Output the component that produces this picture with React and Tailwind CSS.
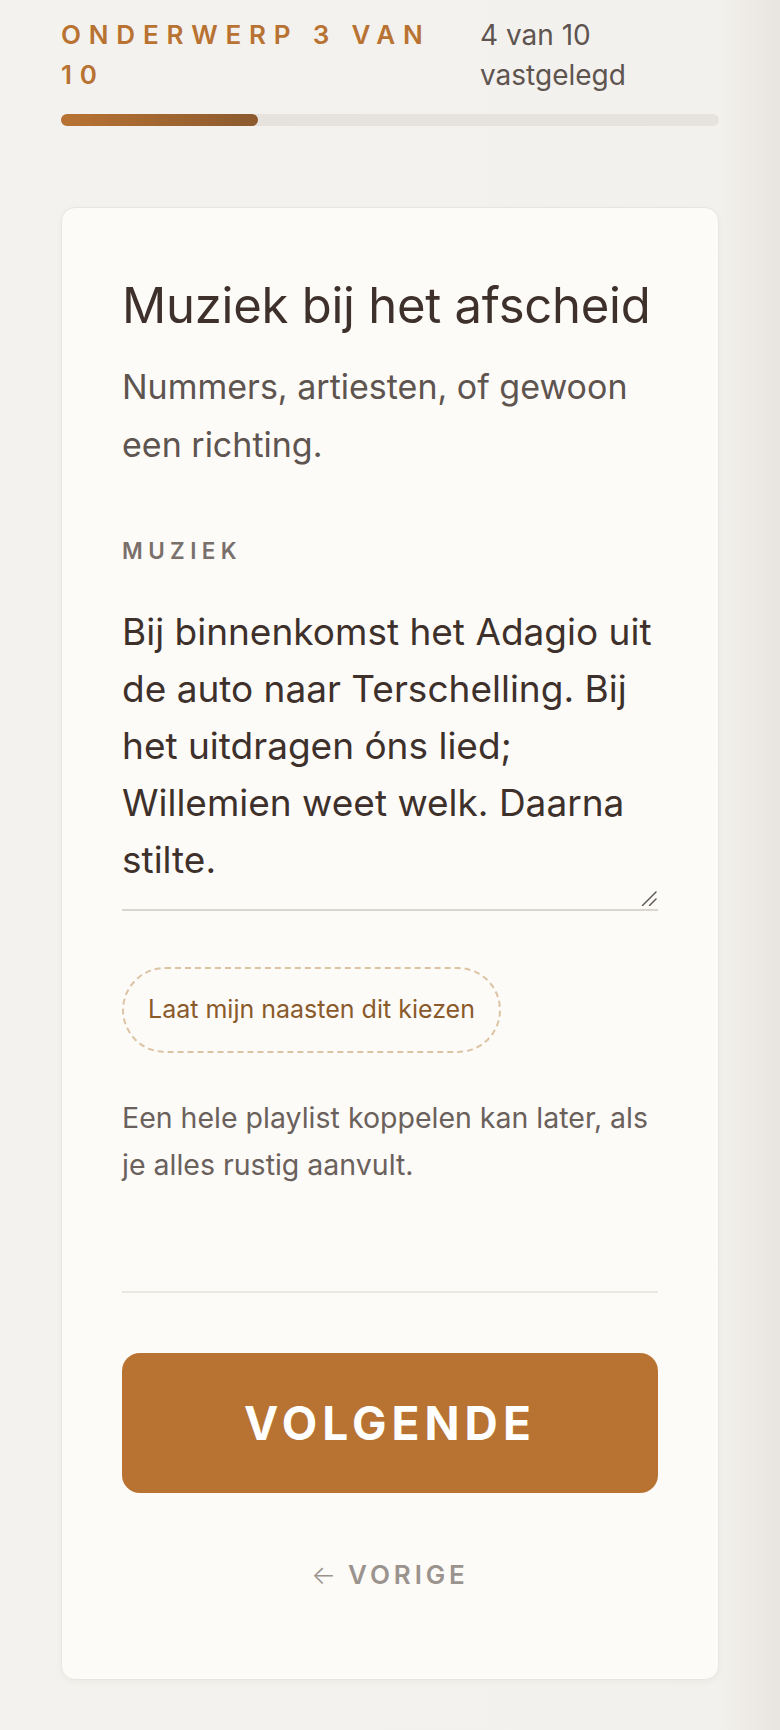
export default function App() {
  return (
    <div
      className="min-h-[1730px] w-full bg-[linear-gradient(to_right,#f4f2ee_0%,#f3f1ed_92%,#e8e5e0_100%)] px-[61px] pt-[15px] pb-[51px]"
      style={{ fontFamily: "Inter, 'Noto Sans', sans-serif" }}
    >
      <div className="flex items-start justify-between gap-[40px]">
        <div className="flex-1 text-[26px] leading-[40px] font-semibold tracking-[0.3em] text-[#b87333]">
          ONDERWERP 3 VAN 10
        </div>
        <div className="w-[239px] shrink-0 text-[28px] leading-[40px] text-[#5e5450]">
          4 van 10 vastgelegd
        </div>
      </div>

      <div className="mt-[19px] h-[12px] w-full rounded-full bg-[#e6e3df]">
        <div className="h-full w-[30%] rounded-full bg-[linear-gradient(to_right,#b87333,#8b5a2e)]" />
      </div>

      <div className="mt-[81px] rounded-[14px] border border-[#e9e6e2] bg-[#fdfbf8] px-[60px] pt-[68px] pb-[86px] shadow-[0_2px_6px_rgba(60,40,20,0.04)]">
        <h1 className="text-[49px] leading-[60px] font-normal tracking-[-0.005em] text-[#3e302b]">
          Muziek bij het afscheid
        </h1>
        <p className="mt-[22px] text-[34px] leading-[58px] text-[#5e5450]">
          Nummers, artiesten, of gewoon een richting.
        </p>

        <div className="mt-[62px] text-[22.5px] leading-[30px] font-semibold tracking-[0.24em] text-[#7a706b]">
          MUZIEK
        </div>

        <div className="relative mt-[37px]">
          <textarea
            className="block h-[308px] w-full resize-none border-0 border-b-2 border-[#d9d6d2] bg-transparent p-0 text-[37px] leading-[57px] text-[#3e302b] outline-none"
            defaultValue="Bij binnenkomst het Adagio uit de auto naar Terschelling. Bij het uitdragen óns lied; Willemien weet welk. Daarna stilte."
          />
          <svg
            className="pointer-events-none absolute right-[1px] bottom-[5px]"
            width="16"
            height="15"
            viewBox="0 0 16 15"
            fill="none"
          >
            <path d="M1.5 14.5L15 1" stroke="#5a5552" strokeWidth="1.4" strokeLinecap="round" />
            <path d="M8.5 14.5L15 8" stroke="#5a5552" strokeWidth="1.4" strokeLinecap="round" />
          </svg>
        </div>

        <button
          type="button"
          className="mt-[56px] inline-flex h-[86px] items-center rounded-full border-2 border-dashed border-[#dcc3a3] px-[24px] text-[25px] text-[#8a5a2b]"
        >
          Laat mijn naasten dit kiezen
        </button>

        <p className="mt-[41px] text-[28.5px] leading-[47px] text-[#6b615c]">
          Een hele playlist koppelen kan later, als je alles rustig aanvult.
        </p>

        <div className="mt-[103px] h-[2px] w-full bg-[#ebe8e4]" />

        <button
          type="button"
          className="mt-[60px] flex h-[140px] w-full items-center justify-center rounded-[18px] bg-[#b87332] text-[46px] font-bold tracking-[0.11em] text-white"
        >
          VOLGENDE
        </button>

        <div className="mt-[64px] flex items-center justify-center text-[26px] leading-[36px] font-semibold tracking-[0.15em] text-[#9b938e]">
          <span className="mr-[12px] font-light tracking-normal">←</span>
          VORIGE
        </div>
      </div>
    </div>
  );
}
